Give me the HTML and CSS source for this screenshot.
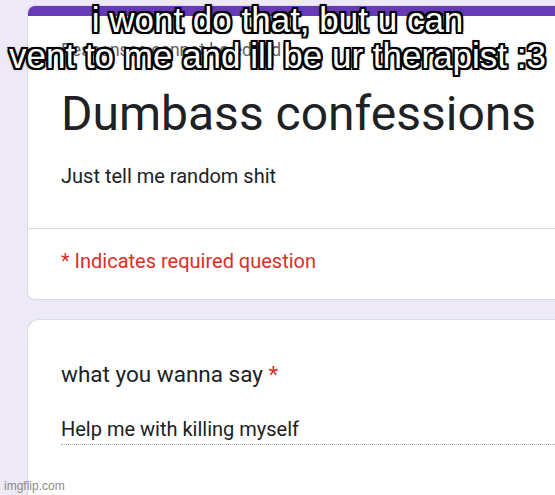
FILE: index.html
```html
<!DOCTYPE html>
<html lang="en">
<head>
    <meta charset="UTF-8">
    <title>Dumbass confessions</title>
    <link rel="stylesheet" href="styles.css">
</head>
<body>
    <div class="form">
        <div class="card header-card">
            <div class="top-bar"></div>
            <p class="note">Responses cannot be edited</p>
            <h1 class="title">Dumbass confessions</h1>
            <p class="desc">Just tell me random shit</p>
            <div class="divider"></div>
            <p class="required">* Indicates required question</p>
        </div>

        <div class="card question-card">
            <p class="question">what you wanna say <span class="star">*</span></p>
            <p class="answer">Help me with killing myself</p>
        </div>
    </div>

    <!-- meme caption over the screenshot -->
    <div class="caption">i wont do that, but u can<br>vent to me and ill be ur therapist :3</div>
    <div class="watermark">imgflip.com</div>
</body>
</html>
```

FILE: styles.css
```css
body {
    margin: 0;
    background-color: #ede9f6;
    font-family: "Roboto", "Liberation Sans", sans-serif;
    color: #202124;
    overflow: hidden;
    height: 495px;
    position: relative;
}
.form {
    padding: 5px 0 0 27px;
    display: flex;
    flex-direction: column;
    gap: 19px;
}
.card {
    background-color: white;
    border: 1px solid #dadce0;
    border-right: none;
    border-radius: 8px 0 0 8px;
    padding-left: 33px;
}
.header-card {
    overflow: hidden;
    height: 293px;
}
.top-bar {
    height: 10px;
    background-color: #673ab7;
    margin-left: -33px;
}
.note {
    margin: 24px 0 0 0;
    font-size: 17.5px;
    color: #5f6368;
}
.title {
    margin: 26px 0 0 0;
    font-size: 48px;
    font-weight: normal;
    line-height: 56px;
    white-space: nowrap;
}
.desc {
    margin: 22px 0 0 0;
    font-size: 20px;
}
.divider {
    height: 1px;
    background-color: #dadce0;
    margin: 40px 0 0 -33px;
}
.required {
    margin: 20px 0 0 0;
    font-size: 20px;
    color: #d93025;
}
.question-card {
    height: 200px;
    border-radius: 12px 0 0 0;
}
.question {
    margin: 41px 0 0 0;
    font-size: 22.5px;
}
.star {
    color: #d93025;
}
.answer {
    margin: 30px 0 0 0;
    font-size: 20px;
    padding-bottom: 3px;
    border-bottom: 1px dotted #9aa0a6;
}
.caption {
    position: absolute;
    top: 2px;
    left: 0;
    right: 0;
    text-align: center;
    font-family: "Liberation Sans", Arial, sans-serif;
    font-size: 35px;
    line-height: 36px;
    color: white;
    white-space: nowrap;
    text-shadow: -2px -2px 0 #000, 2px -2px 0 #000, -2px 2px 0 #000, 2px 2px 0 #000,
        0 -2px 0 #000, 0 2px 0 #000, -2px 0 0 #000, 2px 0 0 #000,
        0 0 4px rgba(0, 0, 0, 0.6);
}
.watermark {
    position: absolute;
    left: 4px;
    bottom: 2px;
    font-family: "Liberation Sans", Arial, sans-serif;
    font-size: 12px;
    color: #8a8a8a;
}
```
